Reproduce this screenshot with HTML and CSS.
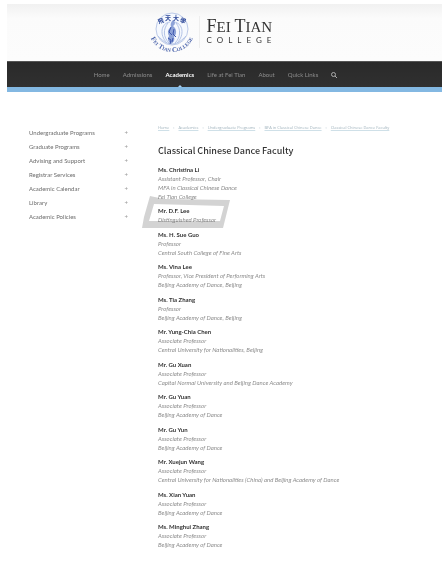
FILE: index.html
```html
<!DOCTYPE html>
<html lang="en">
<head>
    <meta charset="UTF-8">
    <meta name="viewport" content="width=device-width, initial-scale=1.0">
    <title>Classical Chinese Dance Faculty</title>
    <link rel="stylesheet" href="styles.css">
</head>
<body>

    <!-- Logo -->
    <header class="site-header">
        <svg class="emblem" viewBox="0 0 46 46" aria-label="Fei Tian College emblem">
            <defs>
                <path id="ring-text" d="M0 20 A23 23 0 0 0 46 20"/>
            </defs>
            <circle cx="23" cy="20" r="16" fill="#f6f9fe" stroke="#bccae8" stroke-width="1"/>
            <g fill="none" stroke="#b3c3e6" stroke-width="1">
                <path d="M21 13 C12 14 10 26 18 34 M25 13 C34 14 36 26 28 34"/>
                <path d="M19 14 C14 20 14 28 20 34 M27 14 C32 20 32 28 26 34"/>
                <path d="M9 27 C13 31 17 35 23 35 C29 35 33 31 37 27"/>
            </g>
            <path d="M24 11 C27 13 26 16 24 17 C28 20 28 25 25 28 C26 31 25 33 22 35 C19 32 18 30 20 27 C18 23 19 20 22 18 C21 15 22 13 24 11Z" fill="#8ea3d8"/>
            <path d="M22 18 L20 23 L23 26 M25 20 L24 25 L27 28 M19 29 L22 31 L21 35 M24 29 L23 33" fill="none" stroke="#3d57ae" stroke-width="1"/>
            <g class="emblem-cjk">
                <text x="9" y="14" transform="rotate(-20 12 12)">飛</text>
                <text x="16" y="11">天</text>
                <text x="24" y="11">大</text>
                <text x="31" y="14" transform="rotate(20 34 12)">學</text>
            </g>
            <text class="emblem-ring"><textPath href="#ring-text" startOffset="50%" text-anchor="middle">Fei Tian College</textPath></text>
        </svg>
        <div class="wordmark">
            <span class="wordmark-top"><b>F</b>EI <b>T</b>IAN</span>
            <span class="wordmark-bottom">COLLEGE</span>
        </div>
    </header>

    <!-- Main navigation -->
    <nav class="main-nav">
        <a href="#">Home</a>
        <a href="#">Admissions</a>
        <a href="#" class="active">Academics</a>
        <a href="#">Life at Fei Tian</a>
        <a href="#">About</a>
        <a href="#">Quick Links</a>
        <button type="button" class="search-button" aria-label="Search">
            <svg viewBox="0 0 6 6"><circle cx="2.5" cy="2.5" r="2"/><path d="M4 4 L6 6"/></svg>
        </button>
    </nav>

    <div class="page">
        <aside class="side-menu">
            <a href="#">Undergraduate Programs <span>+</span></a>
            <a href="#">Graduate Programs <span>+</span></a>
            <a href="#">Advising and Support <span>+</span></a>
            <a href="#">Registrar Services <span>+</span></a>
            <a href="#">Academic Calendar <span>+</span></a>
            <a href="#">Library <span>+</span></a>
            <a href="#">Academic Policies <span>+</span></a>
        </aside>

        <main class="content">
            <div class="breadcrumb">
                <a href="#">Home</a><span>›</span>
                <a href="#">Academics</a><span>›</span>
                <a href="#">Undergraduate Programs</a><span>›</span>
                <a href="#">BFA in Classical Chinese Dance</a><span>›</span>
                <a href="#">Classical Chinese Dance Faculty</a>
            </div>
            <h1>Classical Chinese Dance Faculty</h1>

            <div class="faculty">
                <section>
                    <h2>Ms. Christina Li</h2>
                    <p>Assistant Professor, Chair</p>
                    <p>MFA in Classical Chinese Dance</p>
                    <p>Fei Tian College</p>
                </section>
                <section class="marked">
                    <h2>Mr. D.F. Lee</h2>
                    <p>Distinguished Professor</p>
                    <svg class="marker" viewBox="0 0 88 34">
                        <path fill-rule="evenodd" d="M8 0 L22 3 L88 4 L81 32 L0 32 L2 21 Z M12 8 L7 25 L78 25 L82 10 Z"/>
                    </svg>
                </section>
                <section>
                    <h2>Ms. H. Sue Guo</h2>
                    <p>Professor</p>
                    <p>Central South College of Fine Arts</p>
                </section>
                <section>
                    <h2>Ms. Vina Lee</h2>
                    <p>Professor, Vice President of Performing Arts</p>
                    <p>Beijing Academy of Dance, Beijing</p>
                </section>
                <section>
                    <h2>Ms. Tia Zhang</h2>
                    <p>Professor</p>
                    <p>Beijing Academy of Dance, Beijing</p>
                </section>
                <section>
                    <h2>Mr. Yung-Chia Chen</h2>
                    <p>Associate Professor</p>
                    <p>Central University for Nationalities, Beijing</p>
                </section>
                <section>
                    <h2>Mr. Gu Xuan</h2>
                    <p>Associate Professor</p>
                    <p>Capital Normal University and Beijing Dance Academy</p>
                </section>
                <section>
                    <h2>Mr. Gu Yuan</h2>
                    <p>Associate Professor</p>
                    <p>Beijing Academy of Dance</p>
                </section>
                <section>
                    <h2>Mr. Gu Yun</h2>
                    <p>Associate Professor</p>
                    <p>Beijing Academy of Dance</p>
                </section>
                <section>
                    <h2>Mr. Xuejun Wang</h2>
                    <p>Associate Professor</p>
                    <p>Central University for Nationalities (China) and Beijing Academy of Dance</p>
                </section>
                <section>
                    <h2>Ms. Xian Yuan</h2>
                    <p>Associate Professor</p>
                    <p>Beijing Academy of Dance</p>
                </section>
                <section>
                    <h2>Ms. Minghui Zhang</h2>
                    <p>Associate Professor</p>
                    <p>Beijing Academy of Dance</p>
                </section>
            </div>
        </main>
    </div>

</body>
</html>
```
FILE: styles.css
```css
* {
    box-sizing: border-box;
}

body {
    display: flex;
    flex-direction: column;
    min-height: 100vh;
    margin: 0;
    padding: 4px 3px 13px 7px;
    background: #fff;
    color: #6c6c6c;
    font-family: Lato, sans-serif;
    font-size: 6px;
    line-height: 9px;
}

a {
    color: inherit;
    text-decoration: none;
}

/* Header */
.site-header {
    display: flex;
    justify-content: center;
    align-items: center;
    gap: 4px;
    height: 57px;
    padding: 0 24px 2px 0;
    background: linear-gradient(#f1f1f1, #fbfbfb 25%, #fcfcfc);
}

.emblem {
    width: 46px;
    height: 46px;
    overflow: visible;
}

.emblem-cjk {
    font-family: "Noto Sans CJK TC", sans-serif;
    font-size: 6px;
    font-weight: 700;
    fill: #2d4899;
}

.emblem-ring {
    font-family: "Liberation Serif", serif;
    font-size: 7px;
    font-variant: small-caps;
    font-weight: 700;
    fill: #4a63ab;
}

.wordmark {
    display: flex;
    flex-direction: column;
    padding: 3px 0 3px 7px;
    border-left: 1px solid #eee;
    color: #333;
}

.wordmark-top {
    font-family: "Liberation Serif", serif;
    font-size: 15px;
    line-height: 15px;
}

.wordmark-top b {
    font-size: 18px;
    font-weight: 400;
}

.wordmark-bottom {
    font-size: 8px;
    line-height: 10px;
    letter-spacing: 5px;
}

/* Navigation bar */
.main-nav {
    display: flex;
    justify-content: center;
    align-items: center;
    gap: 13px;
    height: 31px;
    padding-right: 18px;
    border-top: 1px solid #555;
    border-bottom: 5px solid #83b8e2;
    background: linear-gradient(#2a2a2a, #303030);
    color: #8c8c8c;
}

.main-nav .active {
    position: relative;
    color: #fff;
    font-weight: 700;
}

.main-nav .active::after {
    content: "";
    position: absolute;
    left: 50%;
    bottom: -8px;
    margin-left: -2px;
    border: 2px solid transparent;
    border-top: 0;
    border-bottom-color: #a9d2f2;
}

.search-button {
    display: flex;
    padding: 0;
    border: 0;
    background: none;
}

.search-button svg {
    width: 6px;
    height: 6px;
    fill: none;
    stroke: #aaa;
    stroke-width: 1;
}

/* Page columns */
.page {
    flex: 1;
    display: grid;
    grid-template-columns: 99px 1fr;
    gap: 30px;
    padding: 31px 22px 0 22px;
}

.side-menu {
    display: flex;
    flex-direction: column;
    gap: 5px;
    padding-top: 5px;
}

.side-menu a {
    display: flex;
    justify-content: space-between;
}

.side-menu span {
    color: #999;
}

.content {
    display: flex;
    flex-direction: column;
}

.breadcrumb {
    display: flex;
    gap: 4px;
    color: #9fb2bc;
    font-family: "Open Sans", sans-serif;
    font-size: 4px;
    white-space: nowrap;
}

.breadcrumb a {
    text-decoration: underline #cfe0e8;
}

h1 {
    margin: 11px 0 6px;
    color: #333;
    font-family: "Noto Sans CJK SC", sans-serif;
    font-size: 9px;
    line-height: 16px;
    font-weight: 500;
}

/* Faculty list, spread over the rest of the page */
.faculty {
    flex: 1;
    display: flex;
    flex-direction: column;
    justify-content: space-between;
}

.faculty h2 {
    margin: 0;
    color: #333;
    font-size: 6px;
    line-height: 9px;
    font-weight: 700;
}

.faculty p {
    margin: 0;
    color: #8c8c8c;
    font-style: italic;
}

.marked {
    position: relative;
}

/* Grey marker stroke round the entry */
.marker {
    position: absolute;
    top: -10px;
    left: -16px;
    width: 88px;
    height: 34px;
    fill: #d3d3d3;
    mix-blend-mode: multiply;
}
```
